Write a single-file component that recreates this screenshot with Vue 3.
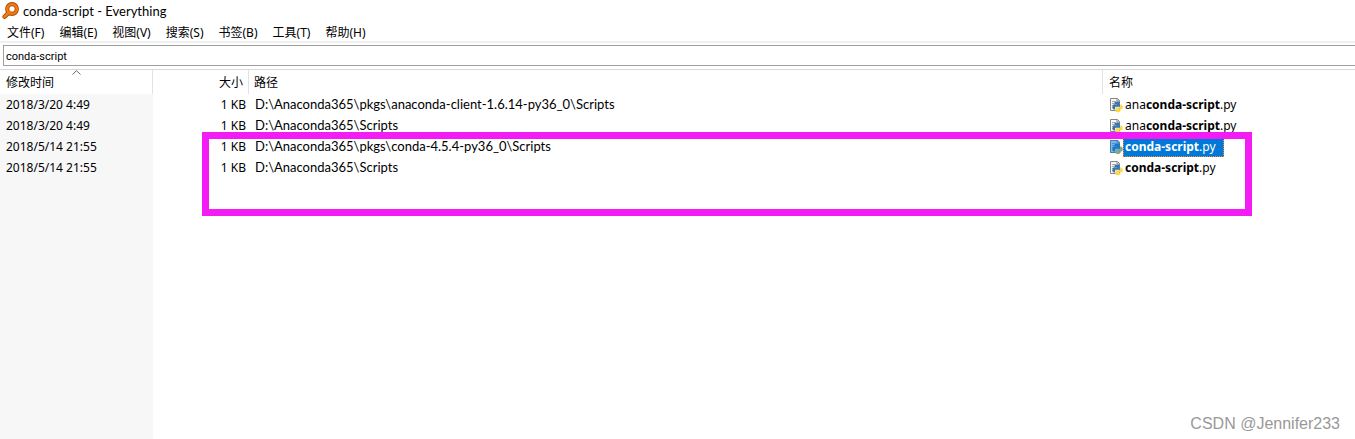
<script setup>
import { ref } from 'vue'

const menus = ['文件(F)', '编辑(E)', '视图(V)', '搜索(S)', '书签(B)', '工具(T)', '帮助(H)']
const query = ref('conda-script')
const rows = [
  { time: '2018/3/20 4:49', path: 'D:\\Anaconda365\\pkgs\\anaconda-client-1.6.14-py36_0\\Scripts', pre: 'ana' },
  { time: '2018/3/20 4:49', path: 'D:\\Anaconda365\\Scripts', pre: 'ana' },
  { time: '2018/5/14 21:55', path: 'D:\\Anaconda365\\pkgs\\conda-4.5.4-py36_0\\Scripts', pre: '', selected: true },
  { time: '2018/5/14 21:55', path: 'D:\\Anaconda365\\Scripts', pre: '' },
]
</script>

<template>
  <div class="window">
    <header class="title">
      <svg class="logo" width="18" height="18" viewBox="0 0 18 18" aria-hidden="true">
        <path d="M6.8 10.6 L2.6 14.8" stroke="#a34a08" stroke-width="4.4" stroke-linecap="round" />
        <circle cx="10" cy="7" r="4.8" fill="#fff" stroke="#a34a08" stroke-width="4.2" />
        <path d="M6.8 10.6 L2.6 14.8" stroke="#f5790d" stroke-width="2.8" stroke-linecap="round" />
        <circle cx="10" cy="7" r="4.8" fill="none" stroke="#f5790d" stroke-width="2.6" />
      </svg>
      <span>conda-script - Everything</span>
    </header>
    <nav class="menu">
      <button v-for="m in menus" :key="m" type="button">{{ m }}</button>
    </nav>
    <div class="search">
      <input v-model="query" type="text" aria-label="搜索" spellcheck="false" />
    </div>
    <main class="results">
      <table>
        <colgroup>
          <col class="c-time" /><col class="c-size" /><col /><col class="c-name" />
        </colgroup>
        <thead>
          <tr>
            <th class="sorted">
              修改时间
              <svg class="caret" width="9" height="5" viewBox="0 0 9 5" aria-hidden="true">
                <path d="M0.5 4.5 L4.5 0.7 L8.5 4.5" fill="none" stroke="#666" />
              </svg>
            </th>
            <th class="size">大小</th>
            <th>路径</th>
            <th>名称</th>
          </tr>
        </thead>
        <tbody>
          <tr v-for="(r, i) in rows" :key="i" :class="{ selected: r.selected }">
            <td>{{ r.time }}</td>
            <td class="size">1 KB</td>
            <td class="path">{{ r.path }}</td>
            <td>
              <div class="file">
                <svg width="14" height="16" viewBox="0 0 14 16" aria-hidden="true">
                  <path d="M1.5 1.5 H8.5 L10.5 3.5 V13.5 H1.5 Z" fill="#f9f9f9" stroke="#868686" />
                  <path d="M8 1.5 V4 H10.5" fill="none" stroke="#868686" />
                  <path d="M3 4.5 H6.5 M3 6.5 H5 M3 8.5 H4 M3 10.5 H4" stroke="#a8a8a8" />
                  <path d="M5.4 5.6 Q5.4 4.4 8 4.4 Q10.8 4.4 10.8 5.8 V8.6 Q10.8 9.8 9.6 9.8 H7.2 Q6 9.8 6 11 V12.4 H5 Q3.4 12.4 3.4 9.9 Q3.4 7.2 5 7.2 H8 V6.9 H5.4 Z" fill="#3976b0" />
                  <path d="M11.2 7.4 H12 Q13.8 7.4 13.8 9.9 Q13.8 12.5 12 12.5 H9.2 V12.9 H11.4 V13.9 Q11.4 15.2 8.8 15.2 Q6.4 15.2 6.4 13.9 V11.4 Q6.4 10.2 7.6 10.2 H10 Q11.2 10.2 11.2 9 Z" fill="#fbd94a" />
                  <path v-if="r.selected" d="M1 1 H9 L11 3 V7.4 Q13.8 7.4 13.8 10 Q13.8 12.5 12 12.5 L11.4 14 Q9 16 6.4 14 H1 Z" fill="#0078d7" fill-opacity="0.5" />
                </svg>
                <span class="name">{{ r.pre }}<b>conda-script</b>.py</span>
              </div>
            </td>
          </tr>
        </tbody>
      </table>
      <div class="filler"></div>
      <div class="marker"></div>
    </main>
    <div class="watermark">CSDN @Jennifer233</div>
  </div>
</template>

<style>
body {
  margin: 0;
  background: #fff;
}
</style>

<style scoped>
.window {
  position: relative;
  display: flex;
  flex-direction: column;
  min-height: 100vh;
  overflow: hidden;
  background: #fff;
  color: #000;
  font: 12px/20px "Noto Sans", "Noto Sans CJK SC", sans-serif;
}
.title {
  display: flex;
  align-items: center;
  gap: 3px;
  height: 22px;
  padding-left: 2px;
}
.title span {
  font: 13px/20px Lato, sans-serif;
}
.menu {
  display: flex;
  gap: 15px;
  height: 19px;
  padding-left: 7px;
  border-bottom: 2px solid #f0f0f0;
}
.menu button {
  padding: 1px 0 0;
  border: 0;
  background: none;
  color: inherit;
  font: inherit;
}
.search {
  padding: 2px 0 3px 3px;
  border-bottom: 1px solid #d9d9d9;
}
.search input {
  display: block;
  box-sizing: border-box;
  width: 100%;
  height: 21px;
  padding: 2px 2px 0;
  border: 1px solid #a0a0a0;
  border-right: 0;
  outline: 0;
  color: #000;
  font: 11px Roboto, sans-serif;
}
.results {
  position: relative;
  display: flex;
  flex: 1;
  flex-direction: column;
}
table {
  width: 100%;
  table-layout: fixed;
  border-collapse: separate;
  border-spacing: 0;
}
.c-time {
  width: 153px;
}
.c-size {
  width: 96px;
}
.c-name {
  width: 252px;
}
th {
  position: relative;
  box-sizing: border-box;
  height: 24px;
  padding: 2px 5px 0;
  border-right: 1px solid #e2e2e2;
  font-weight: 400;
  text-align: left;
}
th:first-child {
  padding-left: 6px;
}
th:last-child {
  padding-left: 6px;
  border-right: 0;
}
td {
  box-sizing: border-box;
  height: 21px;
  padding: 0 6px;
  white-space: nowrap;
}
.path {
  padding-bottom: 2px;
  font: 13px/18px Lato, sans-serif;
}
th.size {
  text-align: right;
}
td.size {
  padding-right: 3px;
  text-align: right;
}
td:first-child,
.filler {
  background: #f7f7f7;
}
.filler {
  flex: 1;
  width: 153px;
}
.caret {
  position: absolute;
  top: 0;
  left: 72px;
}
.file {
  display: flex;
  align-items: center;
}
.name {
  padding: 0 8px 0 2px;
}
.selected .name {
  background: #0078d7;
  color: #fff;
  outline: 1px dotted #ff8728;
  outline-offset: -1px;
}
.marker {
  position: absolute;
  top: 62px;
  right: 103px;
  left: 202px;
  box-sizing: border-box;
  height: 84px;
  border: 7px solid #f41cf4;
}
.watermark {
  position: absolute;
  right: 15px;
  bottom: 5px;
  color: #999;
  font: 16px/20px "Liberation Sans", sans-serif;
}
</style>
